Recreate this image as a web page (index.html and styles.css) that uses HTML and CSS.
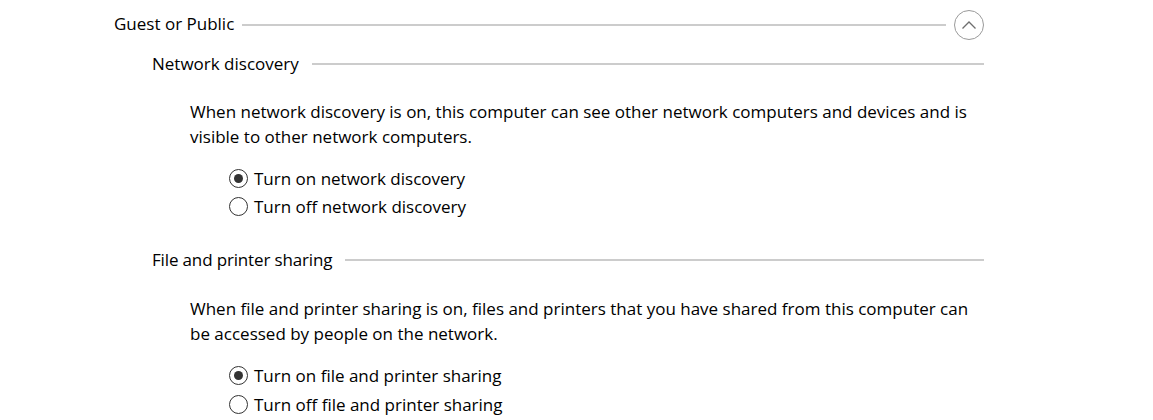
FILE: index.html
```html
<!DOCTYPE html>
<html>
<head>
<meta charset="utf-8">
<link rel="stylesheet" href="styles.css">
</head>
<body>
<div class="page">
  <div class="group-head">
    <span class="group-title">Guest or Public</span>
    <span class="rule"></span>
    <button class="collapse" aria-label="Collapse">
      <svg width="16" height="10" viewBox="0 0 16 10"><path d="M1.5 8.5 L8 2 L14.5 8.5" fill="none" stroke="#6e6e6e" stroke-width="1.3"/></svg>
    </button>
  </div>

  <div class="section first">
    <div class="section-head">
      <span class="section-title">Network discovery</span>
      <span class="rule"></span>
    </div>
    <p class="desc">When network discovery is on, this computer can see other network computers and devices and is visible to other network computers.</p>
    <div class="options">
      <label class="option"><input type="radio" name="nd" checked><span>Turn on network discovery</span></label>
      <label class="option"><input type="radio" name="nd"><span>Turn off network discovery</span></label>
    </div>
  </div>

  <div class="section second">
    <div class="section-head">
      <span class="section-title">File and printer sharing</span>
      <span class="rule"></span>
    </div>
    <p class="desc">When file and printer sharing is on, files and printers that you have shared from this computer can be accessed by people on the network.</p>
    <div class="options">
      <label class="option"><input type="radio" name="fp" checked><span>Turn on file and printer sharing</span></label>
      <label class="option"><input type="radio" name="fp"><span>Turn off file and printer sharing</span></label>
    </div>
  </div>
</div>
</body>
</html>
```
FILE: styles.css
```css
html, body {
  margin: 0;
  padding: 0;
  background: #ffffff;
}
body {
  font-family: "Open Sans", "Noto Sans", sans-serif;
  font-size: 17px;
  color: #000000;
}
.page {
  width: 870px;
  margin-left: 114px;
  padding-top: 10px;
}
.group-head {
  display: flex;
  align-items: center;
  height: 29px;
}
.group-title {
  line-height: 24px;
  margin-right: 8px;
  margin-top: -2px;
}
.rule {
  flex: 1;
  height: 2px;
  background: #cccccc;
}
.group-head .rule {
  margin-right: 8px;
}
.collapse {
  width: 30px;
  height: 30px;
  border: 1px solid #9a9a9a;
  border-radius: 50%;
  background: #ffffff;
  padding: 0;
  display: flex;
  align-items: center;
  justify-content: center;
}
.section {
  margin-left: 38px;
  margin-top: 13px;
}
.section.second {
  margin-top: 28px;
}
.section-head {
  display: flex;
  align-items: center;
  height: 24px;
}
.section-title {
  line-height: 24px;
  margin-right: 13px;
}
.second .section-title {
  letter-spacing: -0.15px;
}
.desc {
  margin: 24px 0 0 38px;
  line-height: 25px;
  width: 780px;
}
.first .desc {
  margin-top: 23px;
}
.options {
  margin: 15px 0 0 77px;
}
.option {
  display: flex;
  align-items: center;
  height: 28px;
}
.second .option {
  height: 29px;
}
.option input {
  appearance: none;
  -webkit-appearance: none;
  margin: 0 6px 0 0;
  width: 19px;
  height: 19px;
  border: 1.5px solid #333333;
  border-radius: 50%;
  background: #ffffff;
  box-sizing: border-box;
  display: grid;
  place-items: center;
}
.option input:checked::after {
  content: "";
  width: 9px;
  height: 9px;
  border-radius: 50%;
  background: #333333;
}
```
